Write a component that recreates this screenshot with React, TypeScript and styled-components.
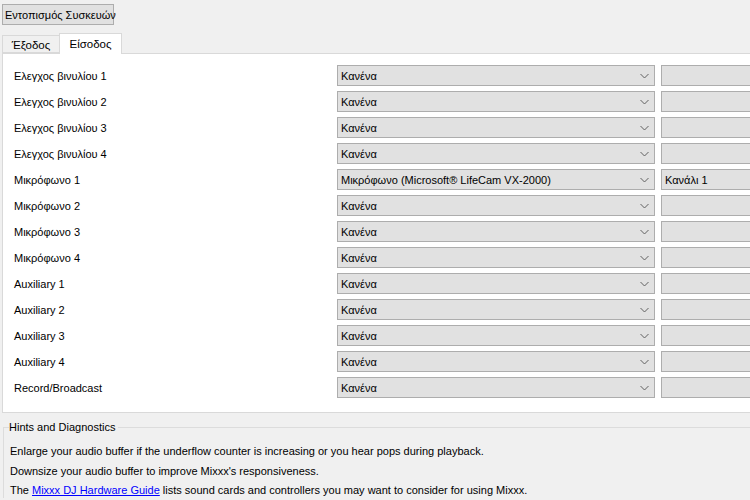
import React from "react";
import styled, { createGlobalStyle } from "styled-components";

const Global = createGlobalStyle`
  html, body { margin: 0; padding: 0; background: #f0f0f0; }
  body {
    width: 750px; height: 500px; overflow: hidden;
    font-family: "Liberation Sans", Arial, sans-serif; font-size: 11px; color: #000;
  }
`;

const Page = styled.div`
  display: flex;
  flex-direction: column;
  padding: 4px 0 0 2px;
  width: 748px;
  height: 496px;
  overflow: hidden;
`;

const TopButton = styled.button`
  align-self: flex-start;
  width: 112px;
  height: 21px;
  padding: 0 0 0 2px;
  background: #e1e1e1;
  border: 1px solid #adadad;
  font: inherit;
  font-size: 11px;
  color: #000;
  text-align: left;
  white-space: nowrap;
`;

const TabBar = styled.div`
  display: flex;
  align-items: flex-end;
  margin-top: 7px;
  height: 21px;
  position: relative;
  z-index: 1;
`;

const Tab = styled.div<{ $active?: boolean }>`
  box-sizing: border-box;
  display: flex;
  align-items: center;
  justify-content: center;
  width: ${(p) => (p.$active ? "63px" : "57px")};
  height: ${(p) => (p.$active ? "21px" : "18px")};
  margin-bottom: ${(p) => (p.$active ? "-1px" : "0")};
  background: ${(p) => (p.$active ? "#ffffff" : "#f0f0f0")};
  border: 1px solid #d9d9d9;
  border-bottom: ${(p) => (p.$active ? "none" : "1px solid #d9d9d9")};
  border-right: ${(p) => (p.$active ? "1px solid #d9d9d9" : "none")};
  font-size: 11.5px;
  padding-top: ${(p) => (p.$active ? "0" : "2px")};
`;

const Panel = styled.div`
  box-sizing: border-box;
  height: 360px;
  background: #fff;
  border: 1px solid #d9d9d9;
  border-right: none;
  padding: 11px 0 0 11px;
  display: flex;
  flex-direction: column;
  gap: 5px;
  overflow: hidden;
`;

const Row = styled.div`
  display: grid;
  grid-template-columns: 317px 318px 100px;
  column-gap: 6px;
  align-items: center;
  height: 21px;
`;

const Label = styled.div`
  font-size: 11px;
  padding-top: 1px;
`;

const Combo = styled.div`
  box-sizing: border-box;
  height: 21px;
  background: #e1e1e1;
  border: 1px solid #adadad;
  display: flex;
  align-items: center;
  justify-content: space-between;
  padding: 0 5px 0 3px;
  font-size: 11px;
`;

const Field = styled(Combo)`
  width: 100px;
`;

const Chevron = () => (
  <svg width="9" height="6" viewBox="0 0 9 6">
    <path d="M0.5 1 L4.5 5 L8.5 1" fill="none" stroke="#606060" strokeWidth="1" />
  </svg>
);

const Group = styled.fieldset`
  margin: 8px 0 0 1px;
  padding: 11px 0 0 6px;
  border: 1px solid #dcdcdc;
  border-right: none;
  border-bottom: none;
  display: flex;
  flex-direction: column;
  gap: 5px;
`;

const Legend = styled.legend`
  padding: 0 3px 0 0;
  margin-left: -1px;
  font-size: 11px;
`;

const Hint = styled.div`
  font-size: 11px;
  line-height: 14.5px;
`;

const Link = styled.a`
  color: #0000ff;
  text-decoration: underline;
`;

const rows: [string, string, string][] = [
  ["Ελεγχος βινυλίου 1", "Κανένα", ""],
  ["Ελεγχος βινυλίου 2", "Κανένα", ""],
  ["Ελεγχος βινυλίου 3", "Κανένα", ""],
  ["Ελεγχος βινυλίου 4", "Κανένα", ""],
  ["Μικρόφωνο 1", "Μικρόφωνο (Microsoft® LifeCam VX-2000)", "Κανάλι 1"],
  ["Μικρόφωνο 2", "Κανένα", ""],
  ["Μικρόφωνο 3", "Κανένα", ""],
  ["Μικρόφωνο 4", "Κανένα", ""],
  ["Auxiliary 1", "Κανένα", ""],
  ["Auxiliary 2", "Κανένα", ""],
  ["Auxiliary 3", "Κανένα", ""],
  ["Auxiliary 4", "Κανένα", ""],
  ["Record/Broadcast", "Κανένα", ""],
];

export default function App() {
  return (
    <>
      <Global />
      <Page>
        <TopButton>Εντοπισμός Συσκευών</TopButton>
        <TabBar>
          <Tab>Έξοδος</Tab>
          <Tab $active>Είσοδος</Tab>
        </TabBar>
        <Panel>
          {rows.map(([label, dev, ch]) => (
            <Row key={label}>
              <Label>{label}</Label>
              <Combo>
                <span>{dev}</span>
                <Chevron />
              </Combo>
              <Field>{ch}</Field>
            </Row>
          ))}
        </Panel>
        <Group>
          <Legend>Hints and Diagnostics</Legend>
          <Hint>Enlarge your audio buffer if the underflow counter is increasing or you hear pops during playback.</Hint>
          <Hint>Downsize your audio buffer to improve Mixxx's responsiveness.</Hint>
          <Hint>
            The <Link href="#">Mixxx DJ Hardware Guide</Link> lists sound cards and controllers you may want to consider for using Mixxx.
          </Hint>
        </Group>
      </Page>
    </>
  );
}
